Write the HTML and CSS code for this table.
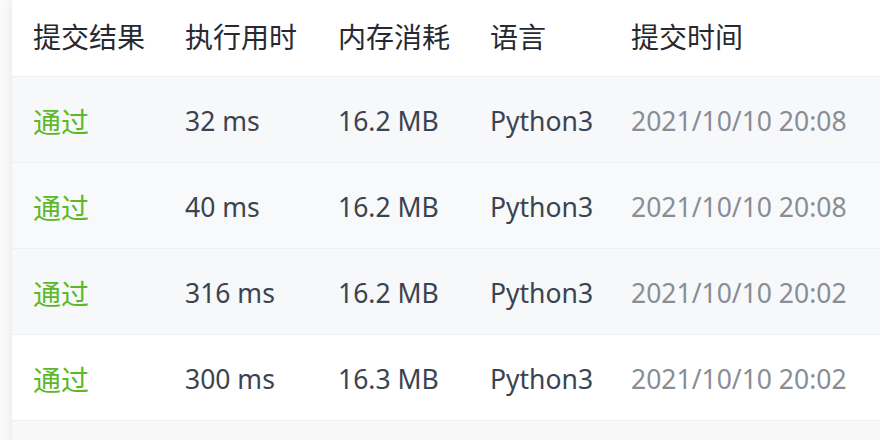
FILE: index.html
```html
<!DOCTYPE html>
<html lang="zh">
<head>
<meta charset="utf-8">
<link rel="stylesheet" href="styles.css">
</head>
<body>
<div class="page">
  <div class="card">
    <table class="subs">
      <colgroup>
        <col class="c1"><col class="c2"><col class="c3"><col class="c4"><col class="c5">
      </colgroup>
      <thead>
        <tr><th>提交结果</th><th>执行用时</th><th>内存消耗</th><th>语言</th><th>提交时间</th></tr>
      </thead>
      <tbody>
        <tr class="alt"><td class="ok">通过</td><td>32 ms</td><td>16.2 MB</td><td>Python3</td><td class="time">2021/10/10 20:08</td></tr>
        <tr class="alt2"><td class="ok">通过</td><td>40 ms</td><td>16.2 MB</td><td>Python3</td><td class="time">2021/10/10 20:08</td></tr>
        <tr class="alt"><td class="ok">通过</td><td>316 ms</td><td>16.2 MB</td><td>Python3</td><td class="time">2021/10/10 20:02</td></tr>
        <tr><td class="ok">通过</td><td>300 ms</td><td>16.3 MB</td><td>Python3</td><td class="time">2021/10/10 20:02</td></tr>
        <tr class="alt"><td class="ok"></td><td></td><td></td><td></td><td class="time"></td></tr>
      </tbody>
    </table>
  </div>
</div>
</body>
</html>
```
FILE: styles.css
```css
html, body {
  margin: 0;
  padding: 0;
  background: #fafafa;
}
.page {
  padding-left: 12px;
  height: 440px;
  overflow: hidden;
}
.card {
  background: #fff;
  box-shadow: 0 0 10px rgba(0, 0, 0, 0.09);
  min-height: 440px;
}
.subs {
  width: 100%;
  border-collapse: collapse;
  table-layout: fixed;
  font-family: "Noto Sans", "Noto Sans CJK SC", sans-serif;
  font-size: 26.5px;
  line-height: 1.2;
}
.c1 { width: 152px; }
.c2 { width: 153px; }
.c3 { width: 152px; }
.c4 { width: 141px; }
.subs th, .subs td {
  text-align: left;
  padding: 0 0 0 21px;
  white-space: nowrap;
  vertical-align: middle;
}
.subs th {
  height: 73px;
  padding-bottom: 3px;
  font-weight: 400;
  font-size: 28px;
  color: #262a30;
  border-bottom: 1px solid #eeeff1;
  font-family: "Noto Sans CJK SC", sans-serif;
}
.subs td {
  height: 81px;
  padding-top: 4px;
  color: #3b4350;
  border-bottom: 1px solid #eeeff1;
}
.subs tr.alt td { background: #f7f8fa; }
.subs tr.alt2 td { background: #f8f9fa; }
.subs td.ok {
  color: #5cb82a;
  font-size: 28px;
  font-family: "Noto Sans CJK SC", sans-serif;
}
.subs td.time { color: #888d96; }
```
